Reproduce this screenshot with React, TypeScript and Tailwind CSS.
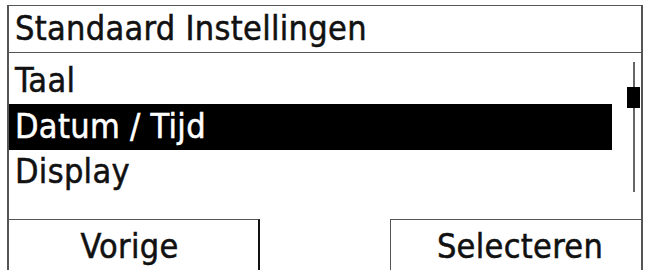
import React from "react";

const font = { fontFamily: '"DejaVu Sans Condensed", "DejaVu Sans", sans-serif' };

export default function App() {
  return (
    <div className="w-[646px] h-[270px] bg-white overflow-hidden" style={font}>
      <div className="ml-[7px] mt-[5px] w-[636px] h-[265px] border-t border-l-2 border-r-2 border-[#555] flex flex-col">
        <div className="h-[47px] border-b border-[#555] flex items-center pl-[6px] pb-[3px] text-[34px] tracking-[0.3px] leading-none text-[#111] [-webkit-text-stroke:0.5px_#111]">
          Standaard Instellingen
        </div>
        <div className="h-[166px] flex">
          <div className="w-[603px] pt-[5px] flex flex-col text-[34px] tracking-[0.3px] leading-none text-[#111] [-webkit-text-stroke:0.5px_currentColor]">
            <div className="h-[46px] flex items-center pl-[6px] pb-[2px]">Taal</div>
            <div className="h-[46px] flex items-center pl-[6px] pb-[2px] bg-black text-white">Datum / Tijd</div>
            <div className="h-[46px] flex items-center pl-[6px] pb-[4px]">Display</div>
          </div>
          <div className="flex-1 relative">
            <div className="absolute left-[21px] top-[9px] w-[2px] h-[130px] bg-[#666]" />
            <div className="absolute left-[15px] top-[34px] w-[13px] h-[21px] bg-black" />
          </div>
        </div>
        <div className="flex-1 flex justify-between text-[34px] tracking-[0.3px] leading-none text-[#111] [-webkit-text-stroke:0.5px_#111]">
          <div className="w-[251px] border-t border-r-2 border-t-[#555] border-r-[#111] flex items-center justify-center pt-[2px] pr-[8px]">
            Vorige
          </div>
          <div className="w-[251px] border-t border-l border-[#555] flex items-center justify-center pt-[2px] pl-[8px]">
            Selecteren
          </div>
        </div>
      </div>
    </div>
  );
}
